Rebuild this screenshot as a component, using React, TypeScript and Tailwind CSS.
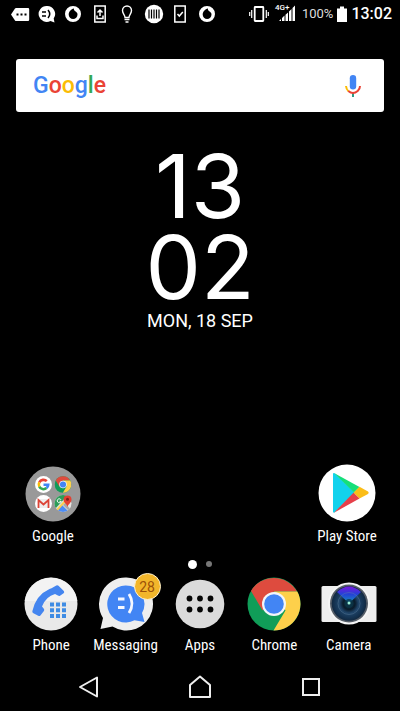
import type { ReactNode } from 'react';

const ROBOTO = "font-['Roboto','Liberation_Sans',sans-serif]";

function StatusIcon({ children }: { children: ReactNode }) {
  return (
    <svg className="h-5 w-5 shrink-0" viewBox="0 0 20 20" fill="none" aria-hidden="true">
      {children}
    </svg>
  );
}

function OperatorIcon() {
  return (
    <StatusIcon>
      <path fillRule="evenodd" fill="#fff" d="M10 2a8 8 0 1 0 0 16a8 8 0 0 0 0-16zM11 4.500c-.4 1.500.4 2 2 3.200c1.100.8 1.500 1.800 1.500 2.900a4.400 4.400 0 0 1-8.800 0c0-3.100 2.300-5.400 5.300-6.100z" />
    </StatusIcon>
  );
}

function StatusBar() {
  return (
    <header className="flex h-7 items-center justify-between pr-2 pl-[10px]">
      <div className="flex w-[207px] shrink-0 justify-between">
        <StatusIcon>
          <path d="M1 10.500 5 4.500Q5.500 4 6 4H18a1.200 1.200 0 0 1 1.200 1.200V15.800a1.200 1.200 0 0 1-1.200 1.200H6Q5.500 17 5 16.500Z" fill="#fff" />
          <path d="M6.500 9.500h2v2h-2zM10.500 9.500h2v2h-2zM14.500 9.500h2v2h-2z" fill="#000" />
        </StatusIcon>
        <StatusIcon>
          <path d="M9.500 2a8 8 0 1 0 4 15l4 1.500-.8-4A8 8 0 0 0 9.500 2z" fill="#fff" />
          <path d="M5 8h4M5 12h4M11 6q3.500 4 0 8" stroke="#000" strokeWidth="1.500" />
        </StatusIcon>
        <OperatorIcon />
        <StatusIcon>
          <rect x="4.800" y="2" width="10.400" height="16" stroke="#fff" strokeWidth="1.500" />
          <path d="M10 12V6M7.500 8.500 10 6l2.500 2.500M7 11.500v3h6v-3" stroke="#fff" strokeWidth="1.500" />
        </StatusIcon>
        <StatusIcon>
          <path d="M8 13.500C8 11 5.500 9.500 5.500 6.500a4.500 4.500 0 0 1 9 0C14.500 9.500 12 11 12 13.500zM7.500 15.500h5M8.500 18h3" stroke="#fff" strokeWidth="1.400" />
        </StatusIcon>
        <StatusIcon>
          <circle cx="10" cy="10" r="9.200" fill="#fff" />
          <path d="M5 5.500v9M7.500 5.500v9M10 5.500v9M12.500 5.500v9M15 5.500v9" stroke="#000" strokeWidth="1.200" />
        </StatusIcon>
        <StatusIcon>
          <rect x="4.800" y="2" width="10.400" height="16" stroke="#fff" strokeWidth="1.500" />
          <path d="m7.500 10 1.800 2 3.500-4" stroke="#fff" strokeWidth="1.500" />
        </StatusIcon>
        <OperatorIcon />
      </div>
      <div className="flex items-center gap-1.5">
        <svg className="h-5 w-5" viewBox="0 0 20 20" fill="none" stroke="#fff" aria-label="Vibrate">
          <rect x="5.700" y="3" width="8.600" height="14" rx=".5" strokeWidth="1.800" />
          <path d="M2.700 6v8M.7 8v4M17.300 6v8M19.300 8v4" strokeWidth="1.200" />
        </svg>
        <div className="relative h-5 w-[21px]">
          <svg className="h-5 w-[21px]" viewBox="0 0 21 20" fill="#fff" aria-hidden="true">
            <path d="M4 17l2-2v2zM7 14l2.500-2.500V17H7zM10.500 10.800 13 8.500V17h-2.500zM14 7.500 16.500 5v12H14zM17.500 4 20 1.500V17h-2.500z" />
          </svg>
          <span className="absolute top-0 left-0 text-[8px] leading-[8px] font-medium">4G+</span>
        </div>
        <div className="flex items-center gap-1">
          <span className="text-[13px] leading-5 text-[#ddd]">100%</span>
          <svg className="h-4 w-[10px]" viewBox="0 0 10 16" fill="#fff" aria-label="Battery full">
            <path d="M3 .5h4v2h3V16H0V2.500h3z" />
          </svg>
          <time className="text-base leading-5 font-medium">13:02</time>
        </div>
      </div>
    </header>
  );
}

function SearchBar() {
  return (
    <form className="mx-4 mt-[31px] flex h-[53px] items-center rounded-[3px] bg-white pr-[21px] pl-[17px]" role="search">
      <label htmlFor="search" className="text-[23px] leading-8 font-medium text-[#4285f4]">
        G<span className="text-[#ea4335]">o</span>
        <span className="text-[#fbbc05]">o</span>g<span className="text-[#34a853]">l</span>
        <span className="text-[#ea4335]">e</span>
      </label>
      <input id="search" type="text" className="min-w-0 flex-1 bg-transparent px-3 text-black outline-none" />
      <button type="button" aria-label="Voice search">
        <svg className="h-6 w-5" viewBox="0 0 20 24" fill="none">
          <rect x="6.800" y="1" width="6.400" height="14.500" rx="3.200" fill="#4285f4" />
          <path d="M10 19v4" stroke="#2f9c84" strokeWidth="2" />
          <path d="M3 12q.3 3.500 2.500 5.200" stroke="#fbbc05" strokeWidth="2" />
          <path d="M5.300 17q4.700 4 9.400 0Q17 15 17 12" stroke="#ea4335" strokeWidth="2" />
        </svg>
      </button>
    </form>
  );
}

function Clock() {
  return (
    <section className="mt-[34px] text-center">
      <div className="font-['Inter','Noto_Sans',sans-serif] text-[88px] leading-[81px] font-normal">
        <div>13</div>
        <div>02</div>
      </div>
      <div className="mt-[3px] text-lg leading-5">MON, 18 SEP</div>
    </section>
  );
}

function ChromeArt() {
  return (
    <>
      <circle cx="27" cy="27" r="26.500" fill="#109d58" />
      <path d="M4 14A26.500 26.500 0 0 1 50 14.500H27L15.500 33.500z" fill="#de4b3e" />
      <path d="M27 14.500H50.300A26.500 26.500 0 0 1 26.500 53.500L38.500 33.500z" fill="#fdd04b" />
      <circle cx="27" cy="27" r="12" fill="#f3f5f8" />
      <circle cx="27" cy="27" r="9.800" fill="#4285f4" />
    </>
  );
}

function FolderIcon() {
  return (
    <svg className="h-14 w-14" viewBox="0 0 56 56" fill="none" aria-hidden="true">
      <circle cx="28" cy="28" r="27.500" fill="#999" />
      <circle cx="18.500" cy="18.500" r="8.500" fill="#fff" />
      <g strokeWidth="2.600">
        <path d="M21.800 15.200A4.700 4.700 0 0 0 14.300 16.400" stroke="#ea4335" />
        <path d="M14.300 16.400a4.700 4.700 0 0 0 0 4.200" stroke="#fbbc05" />
        <path d="M14.300 20.600a4.700 4.700 0 0 0 7.200 1.500" stroke="#34a853" />
        <path d="M21.500 22.100a4.700 4.700 0 0 0 1.700-3.300H18.500" stroke="#4285f4" />
      </g>
      <svg x="29.500" y="10" width="17" height="17" viewBox="0 0 54 54"><ChromeArt /></svg>
      <circle cx="18.500" cy="37.500" r="8.500" fill="#fff" />
      <path d="M13 33h11v9H13z" fill="#eee" />
      <path d="M13.500 42v-8l5 4.500 5-4.500v8" stroke="#dc4437" strokeWidth="1.800" />
      <clipPath id="map-clip"><circle cx="38" cy="37.500" r="8.500" /></clipPath>
      <g clipPath="url(#map-clip)">
        <path d="M29 29h18v18H29z" fill="#e5e5e3" />
        <path d="M29 29h14L29 44z" fill="#2d9d59" />
        <path d="M30 47l7-8 8 8z" fill="#4c8cf5" />
        <path d="M31 45 44 31" stroke="#ffd04c" strokeWidth="2" />
        <path d="M38 39l2-2 7 8v3z" fill="#aaa" />
      </g>
      <path d="M36 33.800a2 2 0 1 0 .2 1.500h-1.700" stroke="#fff" />
      <path d="M42.500 41c-.5-3-4-4-4-7.500a4 4 0 0 1 8 0c0 3.500-3.500 4.500-4 7.500z" fill="#e34133" />
      <circle cx="42.500" cy="33.300" r="1.500" fill="#802019" />
    </svg>
  );
}

function PlayIcon() {
  return (
    <svg className="h-[58px] w-[58px]" viewBox="0 0 58 58" aria-hidden="true">
      <circle cx="29" cy="29" r="28.500" fill="#fff" />
      <path d="M15 10q0-1.500 2-.5L37 29 16.500 48.500q-1.500.5-1.500-1z" fill="#12d2ed" />
      <path d="M16 9 41.500 23 36 28.500 16 9z" fill="#16df79" />
      <path d="M41.500 22.700 50 27.500q1.500 1.200 0 2.500L41.500 34.500 35.500 28.700z" fill="#fbbd18" />
      <path d="M35.500 28.700 41.500 34.500 16 48.700z" fill="#e6404a" />
    </svg>
  );
}

function PhoneIcon() {
  return (
    <svg className="h-[54px] w-[54px]" viewBox="0 0 54 54" aria-hidden="true">
      <circle cx="27" cy="27" r="26.500" fill="#e9e9e9" />
      <path d="M.7 24A26.500 26.500 0 0 1 53.300 24z" fill="#f3f3f3" />
      <path d="M34.500 8.800 39.800 14q1 1.200-.2 2.200L36 18.700q-1 .5-2-.1l-3-1.500Q22 19.500 18 29.500l2 2.500q.5 1-.1 2l-3.500 4.500q-1 1-2.200.2L9 36q-1-.8-.6-2Q12 18 25.500 12l2-.8 4.800-2.600q1.200-.6 2.200.2z" fill="#4485ef" />
      <path d="M26 25.500h4v4h-4zM32 25.500h4v4h-4zM38 25.500h4v4h-4zM26 31.200h4v4h-4zM32 31.200h4v4h-4zM38 31.200h4v4h-4zM26 37h4v4h-4zM32 37h4v4h-4zM38 37h4v4h-4z" fill="#3f8ce4" />
    </svg>
  );
}

function MessagingIcon() {
  return (
    <div className="relative">
      <svg className="h-[54px] w-[54px]" viewBox="0 0 54 54" aria-hidden="true">
        <path d="M27 .5A26.500 26.500 0 0 0 4 41L1.500 52l12-2.500A26.500 26.500 0 1 0 27 .5z" fill="#eee" />
        <path d="M26.500 8.500a18.500 18.500 0 1 0 9 34.800L45.500 45 43 36A18.500 18.500 0 0 0 26.500 8.500z" fill="#4285f4" />
        <path d="M19 22h6.500M19 30.500h6.500M30 17q6 9.500 0 19" fill="none" stroke="#f5f8ff" strokeWidth="2.800" />
      </svg>
      <span className="absolute -top-1 -right-2 flex h-[27px] w-[27px] items-center justify-center rounded-full border border-[#fff3d0] bg-[#f2b62b] text-sm text-[#9d5108]">
        28
      </span>
    </div>
  );
}

function AppsIcon() {
  return (
    <svg className="h-[54px] w-[54px]" viewBox="0 0 54 54" aria-hidden="true">
      <circle cx="27" cy="27" r="24.300" fill="#dbdbdb" />
      <g fill="#050505">
        <circle cx="16.500" cy="21.500" r="2.900" /><circle cx="27" cy="21.500" r="2.900" /><circle cx="37.500" cy="21.500" r="2.900" />
        <circle cx="16.500" cy="32.500" r="2.900" /><circle cx="27" cy="32.500" r="2.900" /><circle cx="37.500" cy="32.500" r="2.900" />
      </g>
    </svg>
  );
}

function ChromeIcon() {
  return (
    <svg className="h-[54px] w-[54px]" viewBox="0 0 54 54" aria-hidden="true">
      <ChromeArt />
    </svg>
  );
}

function CameraIcon() {
  return (
    <svg className="h-[54px] w-14" viewBox="0 0 56 54" aria-hidden="true">
      <defs>
        <radialGradient id="lens-glass">
          <stop offset="0" stopColor="#123648" />
          <stop offset=".35" stopColor="#0a1c2c" />
          <stop offset=".55" stopColor="#20456a" />
          <stop offset=".85" stopColor="#143250" />
          <stop offset="1" stopColor="#122840" />
        </radialGradient>
        <linearGradient id="lens-glare" x2="0" y2="1">
          <stop offset="0" stopColor="#7718df" />
          <stop offset=".45" stopColor="#2440d8" />
          <stop offset="1" stopColor="#1595b8" />
        </linearGradient>
      </defs>
      <rect x=".5" y="9" width="55" height="36" rx="1.500" fill="#eee" />
      <circle cx="28" cy="26.500" r="21" fill="#f5f5f5" />
      <circle cx="28" cy="26.500" r="19" fill="#555d67" />
      <circle cx="28" cy="26.500" r="17.300" fill="url(#lens-glass)" />
      <path d="M28 26.500 16 15Q28 4 40 15z" fill="url(#lens-glare)" />
      <circle cx="28" cy="26.500" r="11" fill="none" stroke="#6687a3" strokeOpacity=".4" />
      <circle cx="28" cy="26.500" r="4.500" fill="#0b3548" opacity=".75" />
      <circle cx="28" cy="26" r="1.500" fill="#9cf2d9" />
    </svg>
  );
}

function AppButton({ label, children }: { label: string; children: ReactNode }) {
  return (
    <button type="button" className="flex flex-col items-center">
      {children}
      <span className="mt-1 font-['Roboto_Condensed','Roboto','Liberation_Sans',sans-serif] text-[15px] leading-5">{label}</span>
    </button>
  );
}

export default function App() {
  return (
    <div className={`flex min-h-screen flex-col bg-black text-white ${ROBOTO}`}>
      <StatusBar />
      <SearchBar />
      <Clock />
      <main className="mt-auto">
        <div className="flex items-end justify-between px-1">
          <div className="grid w-[98px]"><AppButton label="Google"><FolderIcon /></AppButton></div>
          <div className="grid w-[98px]"><AppButton label="Play Store"><PlayIcon /></AppButton></div>
        </div>
        <div className="mt-[13px] flex h-[10px] items-center justify-center gap-[9px]">
          <span className="h-[9px] w-[9px] rounded-full bg-white" />
          <span className="h-1.5 w-1.5 rounded-full bg-[#777]" />
        </div>
        <div className="mt-2 grid grid-cols-5 px-[14px]">
          <AppButton label="Phone"><PhoneIcon /></AppButton>
          <AppButton label="Messaging"><MessagingIcon /></AppButton>
          <AppButton label="Apps"><AppsIcon /></AppButton>
          <AppButton label="Chrome"><ChromeIcon /></AppButton>
          <AppButton label="Camera"><CameraIcon /></AppButton>
        </div>
      </main>
      <nav className="mt-2 flex h-12 items-center justify-around px-[33px]">
        <button type="button" aria-label="Back">
          <svg className="h-6 w-6" viewBox="0 0 24 24" fill="none" stroke="#eee" strokeWidth="2" strokeLinejoin="round"><path d="M20 2.500v19L3 12z" /></svg>
        </button>
        <button type="button" aria-label="Home">
          <svg className="h-6 w-6" viewBox="0 0 24 24" fill="none" stroke="#eee" strokeWidth="2" strokeLinejoin="round"><path d="M2 10 12 1.500 22 10v12H2z" /></svg>
        </button>
        <button type="button" aria-label="Recent apps">
          <svg className="h-6 w-6" viewBox="0 0 24 24" fill="none" stroke="#eee" strokeWidth="2"><path d="M4 4h16v16H4z" /></svg>
        </button>
      </nav>
    </div>
  );
}
